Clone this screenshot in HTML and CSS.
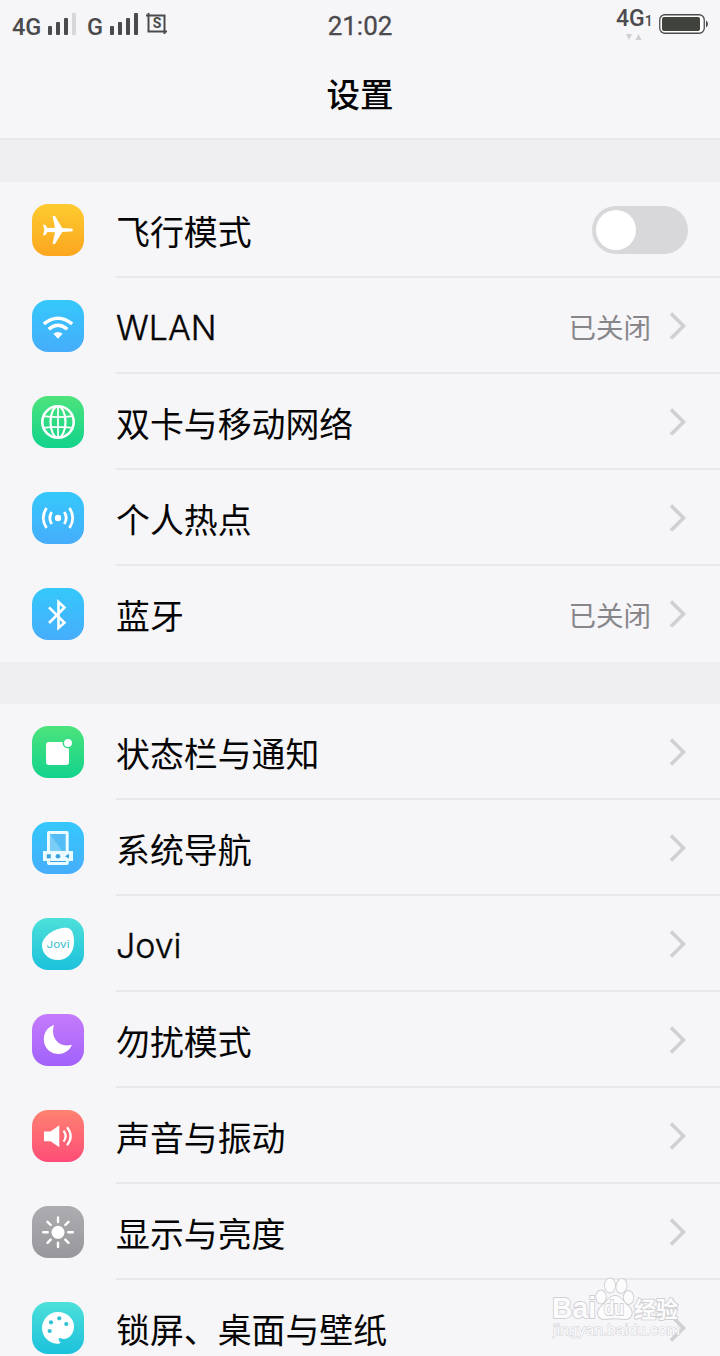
FILE: index.html
```html
<!DOCTYPE html>
<html lang="zh-CN">
<head>
  <meta charset="UTF-8" />
  <title>设置</title>
  <link rel="stylesheet" href="styles.css">
</head>
<body>
<div class="screen">

  <!-- Status bar -->
  <div class="status-bar">
    <div class="status-left">
      <span class="net">4G</span>
      <svg class="signal" width="28" height="22" viewBox="0 0 28 22"><g fill="#4b4a4d"><rect y="13" width="4" height="9" rx="1"/><rect x="8" y="9" width="4" height="13" rx="1"/><rect x="16" y="5" width="4" height="17" rx="1"/></g><rect x="24" width="4" height="22" fill="#d8d7da"/></svg>
      <span class="net net-g">G</span>
      <svg class="signal" width="28" height="22" viewBox="0 0 28 22"><g fill="#4b4a4d"><rect y="13" width="4" height="9" rx="1"/><rect x="8" y="9" width="4" height="13" rx="1"/><rect x="16" y="5" width="4" height="17" rx="1"/><rect x="24" width="4" height="22" rx="1"/></g></svg>
      <div class="shot">
        <svg width="22" height="22" viewBox="0 0 22 22" fill="none" stroke="#4b4a4d" stroke-width="2"><path d="M0 2.500h18.500V21M2.500 0v18.500H21"/></svg>
        <span class="shot-s">S</span>
      </div>
    </div>
    <div class="time">21:02</div>
    <div class="status-right">
      <div class="data">
        <div class="data-net">4G<span class="sim">1</span></div>
        <svg width="16" height="6" viewBox="0 0 16 6" fill="#cfced1"><path d="M0 0h6l-3 6zM9.500 6h6l-3-6z"/></svg>
      </div>
      <svg class="battery" width="50" height="20" viewBox="0 0 50 20"><rect x=".75" y=".75" width="44.500" height="18.500" rx="5" fill="#fff" stroke="#4b4a4d" stroke-width="1.300"/><rect x="3" y="3" width="38" height="14" rx="2" fill="#40423c"/><path d="M47 6.500q2 1 2 3.500t-2 3.500z" fill="#4b4a4d"/></svg>
    </div>
  </div>

  <h1 class="title">设置</h1>

  <!-- Network -->
  <ul class="group">
    <li class="row">
      <div class="icon yellow">
        <svg viewBox="0 0 52 52" fill="#fff"><path d="M11 20.700h2.200l2.300 3.400 7.500-.4L20.500 12H23l7.200 12 8.800.5q2 .2 2 1.500t-2 1.500l-8.800.5L23 40h-2.500L23 28.300l-7.500-.4-2.300 3.400H11l1.400-5.300z"/></svg>
      </div>
      <div class="cell">
        <span class="label">飞行模式</span>
        <span class="switch"></span>
      </div>
    </li>
    <li class="row">
      <div class="icon blue">
        <svg viewBox="0 0 52 52"><g fill="none" stroke="#fff" stroke-width="3.400"><path d="M11.800 23.800q14.200-11.200 28.400 0M16.700 29.300q9.300-8 18.600 0"/></g><path d="M21.300 33.800q4.700-3.600 9.400 0L26 38.700z" fill="#fff"/></svg>
      </div>
      <div class="cell">
        <span class="label latin">WLAN</span>
        <span class="value">已关闭</span>
        <svg class="arrow" viewBox="0 0 18 28"><path d="M2 1.500L14.500 14 2 26.500"/></svg>
      </div>
    </li>
    <li class="row">
      <div class="icon green">
        <svg viewBox="0 0 52 52" fill="none" stroke="#fff" stroke-width="2.200"><circle cx="26" cy="26" r="15.700" stroke-width="2.600"/><ellipse cx="26" cy="26" rx="7.500" ry="15.700"/><path d="M26 10v32M11.500 20.200q14.500 2 29 0M11.500 31.800q14.500-2 29 0" stroke-width="1.700"/></svg>
      </div>
      <div class="cell">
        <span class="label">双卡与移动网络</span>
        <svg class="arrow" viewBox="0 0 18 28"><path d="M2 1.500L14.500 14 2 26.500"/></svg>
      </div>
    </li>
    <li class="row">
      <div class="icon blue">
        <svg viewBox="0 0 52 52"><circle cx="26" cy="26" r="3.200" fill="#fff"/><g fill="none" stroke="#fff" stroke-width="2.800"><path d="M14.500 16q-6.500 10 0 20M37.500 16q6.500 10 0 20M19.700 20q-3.800 6 0 12M32.300 20q3.800 6 0 12"/></g></svg>
      </div>
      <div class="cell">
        <span class="label">个人热点</span>
        <svg class="arrow" viewBox="0 0 18 28"><path d="M2 1.500L14.500 14 2 26.500"/></svg>
      </div>
    </li>
    <li class="row">
      <div class="icon blue">
        <svg viewBox="0 0 52 52" fill="none" stroke="#fff" stroke-width="2.600"><path d="M17 19.300l15.500 15.500-6 5.200V14l6 5.500L17 35"/></svg>
      </div>
      <div class="cell">
        <span class="label">蓝牙</span>
        <span class="value">已关闭</span>
        <svg class="arrow" viewBox="0 0 18 28"><path d="M2 1.500L14.500 14 2 26.500"/></svg>
      </div>
    </li>
  </ul>

  <!-- System -->
  <ul class="group">
    <li class="row">
      <div class="icon green">
        <svg viewBox="0 0 52 52"><rect x="14" y="16" width="23" height="23" rx="3" fill="#fff"/><circle cx="36" cy="17" r="4.700" fill="#fff" stroke="#37dc84" stroke-width="1.500"/></svg>
      </div>
      <div class="cell">
        <span class="label">状态栏与通知</span>
        <svg class="arrow" viewBox="0 0 18 28"><path d="M2 1.500L14.500 14 2 26.500"/></svg>
      </div>
    </li>
    <li class="row">
      <div class="icon blue">
        <svg viewBox="0 0 52 52"><rect x="15" y="9" width="21.700" height="34" rx="2" fill="#eafcff"/><path d="M18 12h15.700v17H18z" fill="#55bdf5"/><path d="M18 12l12 17H18z" fill="#79cdf7"/><path d="M11 29h30v10H11z" fill="#eafcff"/><g fill="#3aa2dc"><path d="M14.800 32.300h4v4h-4z"/><circle cx="26" cy="34.300" r="2.300"/><path d="M37 31.800v5l-4-2.500zM18 39h16v1H18z"/></g></svg>
      </div>
      <div class="cell">
        <span class="label">系统导航</span>
        <svg class="arrow" viewBox="0 0 18 28"><path d="M2 1.500L14.500 14 2 26.500"/></svg>
      </div>
    </li>
    <li class="row">
      <div class="icon cyan">
        <svg viewBox="0 0 52 52"><path d="M10 27C10 19 22 9.800 34 9.800c5.500 0 8 5.200 8 14.200 0 11-7 18-16 18s-16-6-16-15z" fill="#fff"/><text class="jovi" x="26" y="30" text-anchor="middle" textLength="23" lengthAdjust="spacingAndGlyphs">Jovi</text></svg>
      </div>
      <div class="cell">
        <span class="label latin">Jovi</span>
        <svg class="arrow" viewBox="0 0 18 28"><path d="M2 1.500L14.500 14 2 26.500"/></svg>
      </div>
    </li>
    <li class="row">
      <div class="icon purple">
        <svg viewBox="0 0 52 52"><path d="M22 11C8.500 15.500 9.500 33 19 38c8 4.500 17.500 1 21-7.300C27 34.500 18 23.500 22 11z" fill="#fff"/></svg>
      </div>
      <div class="cell">
        <span class="label">勿扰模式</span>
        <svg class="arrow" viewBox="0 0 18 28"><path d="M2 1.500L14.500 14 2 26.500"/></svg>
      </div>
    </li>
    <li class="row">
      <div class="icon red">
        <svg viewBox="0 0 52 52"><path d="M12 21.500h6.500l8.800-6.300v22l-8.800-6H12z" fill="#fff"/><g fill="none" stroke="#fff" stroke-width="2.200"><path d="M31.500 20.800q4.400 5.400 0 10.800M35 17.200q7.400 9 0 18"/></g></svg>
      </div>
      <div class="cell">
        <span class="label">声音与振动</span>
        <svg class="arrow" viewBox="0 0 18 28"><path d="M2 1.500L14.500 14 2 26.500"/></svg>
      </div>
    </li>
    <li class="row">
      <div class="icon gray">
        <svg viewBox="0 0 52 52"><circle cx="26" cy="26.300" r="6.500" fill="#fff"/><path d="M26 11.500v4.500M26 36.600v4.500M11.200 26.300h4.500M36.300 26.300h4.500M15.500 15.800l3.200 3.200M33.300 33.600l3.200 3.200M36.500 15.800l-3.200 3.200M18.700 33.600l-3.200 3.200" stroke="#fff" stroke-width="2.400" stroke-linecap="round"/></svg>
      </div>
      <div class="cell">
        <span class="label">显示与亮度</span>
        <svg class="arrow" viewBox="0 0 18 28"><path d="M2 1.500L14.500 14 2 26.500"/></svg>
      </div>
    </li>
    <li class="row">
      <div class="icon cyan">
        <svg viewBox="0 0 52 52"><path d="M26 10c9 0 16 6.500 16 14.500C42 32 37 37 32 37c-2 0-4-1.200-5-.8-1.200.8.500 3.800 1.800 4.300-1 1-2 1.300-3.800 1.200C16.500 41 10 34.500 10 26s7-16 16-16z" fill="#fff"/><g fill="#2fc2d2"><circle cx="19" cy="20.300" r="2.100"/><circle cx="27.300" cy="16.300" r="2.100"/><circle cx="34.300" cy="22" r="2.100"/><circle cx="17.700" cy="29" r="2.100"/></g></svg>
      </div>
      <div class="cell">
        <span class="label">锁屏、桌面与壁纸</span>
        <svg class="arrow" viewBox="0 0 18 28"><path d="M2 1.500L14.500 14 2 26.500"/></svg>
      </div>
    </li>
  </ul>

  <!-- Watermark -->
  <svg class="watermark" width="140" height="80" viewBox="0 0 140 80">
    <g class="mark">
      <text class="mark-main" x="1" y="47" textLength="44" lengthAdjust="spacingAndGlyphs">Bai</text>
      <ellipse cx="50" cy="26" rx="4.800" ry="6.500"/>
      <ellipse cx="59" cy="14.500" rx="5" ry="7"/>
      <ellipse cx="70.500" cy="15" rx="5" ry="7" transform="rotate(12 70.500 15)"/>
      <ellipse cx="77.500" cy="26.500" rx="4.800" ry="6.500"/>
      <path d="M64 25c6 0 8 6 13 10 7 6 3 14-4 13-6-1-12-1-18 0-8 1-11-7-4-13 5-4 7-10 13-10z"/>
      <text class="mark-du" x="53" y="44" textLength="20" lengthAdjust="spacingAndGlyphs">du</text>
      <text class="mark-cn" x="83" y="46" textLength="44" lengthAdjust="spacingAndGlyphs">经验</text>
      <text class="mark-url" x="2" y="64" textLength="127" lengthAdjust="spacingAndGlyphs">jingyan.baidu.com</text>
    </g>
  </svg>

</div>
</body>
</html>
```
FILE: styles.css
```css
* {
  box-sizing: border-box;
}
body {
  margin: 0;
  background: #f6f5f8;
  color: #050505;
  font-family: "Noto Sans CJK SC", sans-serif;
}
.screen {
  position: relative;
  width: 720px;
  height: 1356px;
  overflow: hidden;
}

/* status bar */
.status-bar {
  display: grid;
  grid-template-columns: 1fr auto 1fr;
  height: 50px;
  padding: 0 12px;
  color: #4b4a4d;
  font-family: Roboto, sans-serif;
}
.status-left {
  display: flex;
  align-items: flex-start;
}
.net {
  width: 36px;
  padding-top: 13px;
  font-size: 23.500px;
  font-weight: 500;
  line-height: 28px;
}
.net-g {
  width: 23px;
  margin-left: 11px;
}
.signal {
  margin-top: 13px;
}
.shot {
  display: grid;
  width: 22px;
  margin: 13px 0 0 8px;
}
.shot svg,
.shot-s {
  grid-area: 1 / 1;
}
.shot-s {
  font-size: 14px;
  font-weight: 700;
  line-height: 21px;
  text-align: center;
}
.time {
  padding-top: 11px;
  font-size: 26px;
  line-height: 30px;
  -webkit-text-stroke: .3px #4b4a4d;
}
.status-right {
  display: flex;
  justify-content: flex-end;
  margin-right: -1px;
}
.data {
  display: flex;
  flex-direction: column;
  width: 43px;
  padding-top: 6px;
}
.data-net {
  font-size: 23px;
  font-weight: 500;
  line-height: 25px;
  white-space: nowrap;
}
.data svg {
  margin-left: 10px;
}
.sim {
  font-size: 14px;
}
.battery {
  margin-top: 14px;
}

.title {
  height: 90px;
  margin: 0;
  border-bottom: 2px solid #e8e7ea;
  font-size: 33.500px;
  font-weight: 500;
  line-height: 86px;
  text-align: center;
}

/* settings list */
.group {
  margin: 0;
  padding: 0;
  border-top: 42px solid #efeef1;
  list-style: none;
}
.row {
  display: flex;
  align-items: center;
  gap: 32px;
  height: 96px;
  padding-left: 32px;
}
.icon {
  flex: none;
  width: 52px;
  height: 52px;
  border-radius: 16px;
}
.icon svg {
  display: block;
}
.yellow { background: linear-gradient(#fecb2f, #fba61f); }
.blue { background: linear-gradient(#35c8fb, #46adfc); }
.green { background: linear-gradient(#4de37c, #12d38c); }
.cyan { background: linear-gradient(#4de0da, #1cc1dc); }
.purple { background: linear-gradient(#c57bfb, #a162fb); }
.red { background: linear-gradient(#fe8271, #fd4d77); }
.gray { background: linear-gradient(#adacb0, #98979b); }
.cell {
  display: flex;
  flex: 1;
  align-items: center;
  height: 96px;
  padding-right: 33px;
  border-bottom: 2px solid #e8e7ea;
}
.row:last-child .cell {
  border-bottom-color: transparent;
}
.label {
  flex: 1;
  padding-top: 2px;
  font-size: 33.900px;
}
.latin {
  padding-top: 5px;
  font-family: Inter, sans-serif;
  font-weight: 300;
  -webkit-text-stroke: .4px #050505;
}
.value {
  padding-top: 2px;
  margin-right: 18px;
  color: #87868a;
  font-size: 27.500px;
}
.arrow {
  width: 18px;
  height: 28px;
  margin-top: 2px;
  fill: none;
  stroke: #d0cfd2;
  stroke-width: 3.600;
}
.switch {
  width: 96px;
  height: 48px;
  margin: 2px -1px 0 0;
  padding: 4px;
  border-radius: 24px;
  background: #d8d7da;
}
.switch::before {
  content: "";
  display: block;
  width: 40px;
  height: 40px;
  border-radius: 50%;
  background: #fff;
}
.jovi {
  fill: #35bccb;
  font-family: Inter, sans-serif;
  font-size: 9.500px;
}

/* watermark */
.watermark {
  position: absolute;
  left: 551px;
  top: 1271px;
}
.mark {
  fill: #fcfcfd;
  stroke: #d0cfd3;
  stroke-width: 1.800px;
  paint-order: stroke;
  font-family: "Liberation Sans", sans-serif;
}
.mark-main {
  font-size: 29px;
  font-weight: bold;
}
.mark-du {
  font-size: 20px;
  font-weight: bold;
}
.mark-cn {
  font-family: "Noto Sans CJK SC", sans-serif;
  font-size: 22px;
  font-weight: bold;
}
.mark-url {
  font-size: 15.500px;
  stroke-width: 1px;
}
```
